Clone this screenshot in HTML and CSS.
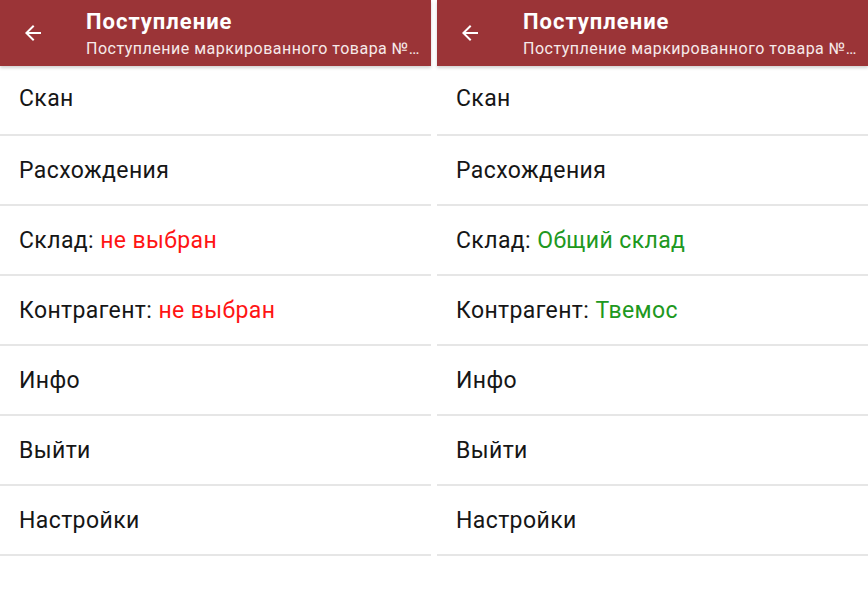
FILE: index.html
```html
<!DOCTYPE html>
<html lang="ru">
<head>
<meta charset="utf-8">
<link rel="stylesheet" href="styles.css">
</head>
<body>
<div class="screens">
  <section class="screen">
    <header class="appbar">
      <svg class="back" width="24" height="24" viewBox="0 0 24 24"><path d="M20 11H7.83l5.59-5.59L12 4l-8 8 8 8 1.41-1.41L7.83 13H20v-2z" fill="#fff"/></svg>
      <div class="titles">
        <div class="title">Поступление</div>
        <div class="subtitle">Поступление маркированного товара №…</div>
      </div>
    </header>
    <ul class="menu">
      <li class="item">Скан</li>
      <li class="item">Расхождения</li>
      <li class="item">Склад: <span class="bad">не выбран</span></li>
      <li class="item">Контрагент: <span class="bad">не выбран</span></li>
      <li class="item">Инфо</li>
      <li class="item">Выйти</li>
      <li class="item">Настройки</li>
    </ul>
  </section>
  <section class="screen">
    <header class="appbar">
      <svg class="back" width="24" height="24" viewBox="0 0 24 24"><path d="M20 11H7.83l5.59-5.59L12 4l-8 8 8 8 1.41-1.41L7.83 13H20v-2z" fill="#fff"/></svg>
      <div class="titles">
        <div class="title">Поступление</div>
        <div class="subtitle">Поступление маркированного товара №…</div>
      </div>
    </header>
    <ul class="menu">
      <li class="item">Скан</li>
      <li class="item">Расхождения</li>
      <li class="item">Склад: <span class="good">Общий склад</span></li>
      <li class="item">Контрагент: <span class="good">Твемос</span></li>
      <li class="item">Инфо</li>
      <li class="item">Выйти</li>
      <li class="item">Настройки</li>
    </ul>
  </section>
</div>
</body>
</html>
```
FILE: styles.css
```css
* { box-sizing: border-box; }
html, body { margin: 0; padding: 0; background: #fff; }
body { font-family: Roboto, "Noto Sans", sans-serif; width: 868px; height: 601px; overflow: hidden; }
.screens { display: flex; gap: 6px; }
.screen { width: 431px; flex: none; }
.appbar {
  height: 66px;
  background: #9b3437;
  display: flex;
  align-items: flex-start;
  box-shadow: 0 2px 3px rgba(0,0,0,0.18);
  position: relative;
}
.back { margin: 21px 41px 0 21px; flex: none; }
.titles { min-width: 0; flex: 1; padding-top: 9px; color: #fff; white-space: nowrap; }
.title { font-size: 22px; font-weight: 700; line-height: 26px; letter-spacing: 1px; }
.subtitle { font-size: 16px; line-height: 20px; margin-top: 4px; letter-spacing: 0.5px; color: #f6eaea; }
.menu { list-style: none; margin: 0; padding: 0; }
.item {
  height: 70px;
  border-bottom: 2px solid #e6e6e6;
  display: flex;
  align-items: center;
  padding-left: 19px;
  font-size: 23px;
  letter-spacing: 0.4px;
  color: #161616;
  white-space: pre;
}
.item:first-child { padding-bottom: 4px; }
.bad { color: #ff1414; }
.good { color: #209820; }
```
